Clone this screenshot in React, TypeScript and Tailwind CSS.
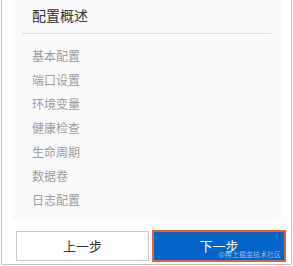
const items = ['基本配置', '端口设置', '环境变量', '健康检查', '生命周期', '数据卷', '日志配置'];

export default function App() {
  return (
    <div
      className="w-[293px] h-[266px] bg-white"
      style={{ fontFamily: '"Noto Sans CJK SC", "Noto Sans", sans-serif' }}
    >
      <div className="ml-[1px] w-[291px] h-[265px] border-x border-b border-[#c4c4c4] flex flex-col">
        {/* Overview panel */}
        <div className="mx-[10px] h-[221px] bg-[#fafafa] px-[10px] pt-[5px]">
          <div className="px-[10px] text-[14px] leading-[20px] text-[#333]">配置概述</div>
          <div className="mt-[8px] border-b border-[#dcdcdc]" />
          <ul className="mt-[10px] px-[10px]">
            {items.map((it) => (
              <li key={it} className="text-[12px] leading-[24px] text-[#9a9a9a]">
                {it}
              </li>
            ))}
          </ul>
        </div>

        {/* Footer buttons */}
        <div className="flex items-center gap-[3px] pl-[14px] pr-[5px] pt-[9px]">
          <button
            type="button"
            className="w-[134px] h-[30px] border border-[#c8c8c8] bg-white text-[13px] text-[#333]"
          >
            上一步
          </button>
          <div className="relative w-[135px] h-[32px] border-2 border-[#e2603e] bg-[#0064c8]">
            <button type="button" className="w-full h-full pb-[5px] text-[13px] leading-[16px] text-white">
              下一步
            </button>
            <span className="absolute right-[3px] bottom-[2px] text-[7px] leading-[8px] text-[#9fb6d6]">
              @稀土掘金技术社区
            </span>
          </div>
        </div>
      </div>
    </div>
  );
}
